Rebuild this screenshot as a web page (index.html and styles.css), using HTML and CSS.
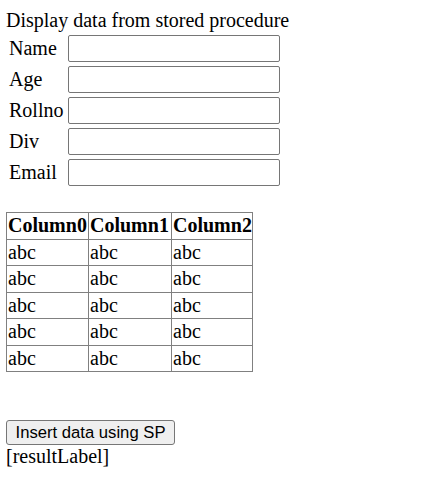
FILE: index.html
```html
<!DOCTYPE html>
<html>
<head>
<meta charset="utf-8">
<title>Display data from stored procedure</title>
<link rel="stylesheet" href="styles.css">
</head>
<body>
<form class="page">
  <div class="title">Display data from stored procedure</div>
  <div class="fields">
    <label class="lbl">Name</label><input class="box" type="text">
    <label class="lbl">Age</label><input class="box" type="text">
    <label class="lbl">Rollno</label><input class="box" type="text">
    <label class="lbl">Div</label><input class="box" type="text">
    <label class="lbl">Email</label><input class="box" type="text">
  </div>
  <table class="grid">
    <colgroup><col class="c0"><col class="c1"><col class="c2"></colgroup>
    <tr><th>Column0</th><th>Column1</th><th>Column2</th></tr>
    <tr><td>abc</td><td>abc</td><td>abc</td></tr>
    <tr><td>abc</td><td>abc</td><td>abc</td></tr>
    <tr><td>abc</td><td>abc</td><td>abc</td></tr>
    <tr><td>abc</td><td>abc</td><td>abc</td></tr>
    <tr><td>abc</td><td>abc</td><td>abc</td></tr>
  </table>
  <button class="btn" type="button">Insert data using SP</button>
  <div class="result">[resultLabel]</div>
</form>
</body>
</html>
```

FILE: styles.css
```css
html, body {
  margin: 0;
  padding: 0;
  background: #ffffff;
}
body {
  font-family: "Liberation Serif", "Times New Roman", serif;
  font-size: 20px;
  color: #000;
}
.page {
  display: flex;
  flex-direction: column;
  align-items: flex-start;
  padding: 9px 6px 0 6px;
}
.title {
  line-height: 23px;
  height: 23px;
}
.fields {
  display: grid;
  grid-template-columns: 57px 212px;
  column-gap: 2px;
  row-gap: 4px;
  grid-auto-rows: 27px;
  align-items: center;
  margin-top: 3px;
  padding-left: 3px;
}
.lbl {
  line-height: 23px;
  white-space: nowrap;
}
.box {
  box-sizing: border-box;
  width: 212px;
  height: 27px;
  margin: 0;
  border: 1px solid #767676;
  border-radius: 2px;
  background: #fff;
  padding: 1px 3px;
  font: 16px Arial, "Liberation Sans", sans-serif;
}
.grid {
  border-collapse: collapse;
  table-layout: fixed;
  border: 1px solid #808080;
  margin-top: 26px;
  width: 246px;
}
.grid col.c0 { width: 82px; }
.grid col.c1 { width: 83px; }
.grid col.c2 { width: 81px; }
.grid th, .grid td {
  border: 1px solid #808080;
  padding: 0 1px;
  text-align: left;
  vertical-align: middle;
  line-height: 23px;
  white-space: nowrap;
  overflow: hidden;
}
.grid tr { height: 26.5px; }
.grid th { font-weight: bold; }
.btn {
  box-sizing: border-box;
  margin-top: 48px;
  width: 169px;
  height: 25px;
  padding: 0;
  border: 1px solid #767676;
  border-radius: 3px;
  background: #efefef;
  color: #000;
  font: 16.67px Arial, "Liberation Sans", sans-serif;
  line-height: 23px;
  text-align: center;
}
.result {
  line-height: 23px;
}
```
